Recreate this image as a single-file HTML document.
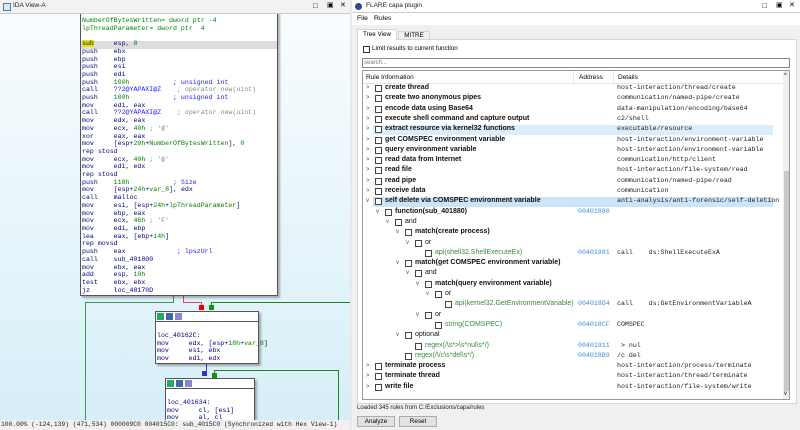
<!DOCTYPE html><html><head><style>
*{margin:0;padding:0;box-sizing:border-box}
body{width:800px;height:430px;overflow:hidden;background:#e8e8e8;font-family:"Liberation Sans",sans-serif;position:relative}
.a{position:absolute;white-space:nowrap}
.m{font-family:"Liberation Mono",monospace}
#L{position:absolute;left:0;top:0;width:350px;height:430px;background:linear-gradient(#fafdfe,#d6eef8);overflow:hidden}
.box{position:absolute;background:#fff;border:1px solid #555;box-shadow:2px 2px 2px rgba(0,0,0,.3)}
.code{font-family:"Liberation Mono",monospace;font-size:6.6px;line-height:7.7px;color:#000080;white-space:pre}
.g{color:#008000}.gy{color:#888}.bl{color:#2020ff}
.ln{position:absolute}
.row{position:absolute;height:10.3px;font-size:7px;line-height:10.3px;white-space:nowrap;left:0;width:412px}
.cb{position:absolute;top:2px;width:7px;height:7px;border:1px solid #444;background:#fff}
.ar{position:absolute;top:0;font-size:6px;color:#555}
.t{position:absolute;font-weight:bold;color:#111}
.d{position:absolute;left:255px;font-family:"Liberation Mono",monospace;font-size:6.6px;color:#222;white-space:pre}
.ad{position:absolute;left:216px;font-family:"Liberation Mono",monospace;font-size:6.6px;color:#3c8ce0}
.gr{color:#3a8a3a!important;font-weight:normal!important}
</style></head><body>
<div id="L">
<!-- edges -->
<div class="ln" style="left:85px;top:302px;width:1px;height:128px;background:#3a9a5a"></div>
<div class="ln" style="left:85px;top:302px;width:89px;height:1px;background:#3a9a5a"></div>
<div class="ln" style="left:173px;top:295px;width:1px;height:8px;background:#3a9a5a"></div>
<div class="ln" style="left:183px;top:295px;width:1px;height:8px;background:#c55"></div>
<div class="ln" style="left:183px;top:302px;width:19px;height:1px;background:#c55"></div>
<div class="ln" style="left:201px;top:302px;width:1px;height:7px;background:#c55"></div>
<div class="a" style="left:199px;top:305px;width:5px;height:5px;background:#e00"></div>
<div class="ln" style="left:211px;top:302px;width:140px;height:1px;background:#1a8a1a"></div>
<div class="ln" style="left:211px;top:302px;width:1px;height:7px;background:#1a8a1a"></div>
<div class="a" style="left:209px;top:305px;width:5px;height:5px;background:#1a8a1a"></div>
<div class="ln" style="left:206px;top:363px;width:1px;height:12px;background:#44d"></div>
<div class="a" style="left:202px;top:371px;width:5px;height:5px;background:#33b"></div>
<div class="ln" style="left:214px;top:370px;width:125px;height:1px;background:#1a8a1a"></div>
<div class="ln" style="left:338px;top:370px;width:1px;height:60px;background:#1a8a1a"></div>
<div class="ln" style="left:214px;top:370px;width:1px;height:7px;background:#1a8a1a"></div>
<div class="a" style="left:212px;top:373px;width:5px;height:5px;background:#1a8a1a"></div>
<!-- main box -->
<div class="box" style="left:80px;top:-10px;width:198px;height:306px">
<div class="a" style="left:0;top:50px;width:196px;height:7.7px;background:#ddd"></div>
<div class="code a" style="left:1px;top:26px"><span class="g">NumberOfBytesWritten= dword ptr -4
lpThreadParameter= dword ptr  4</span>

<span style="background:#e6e600">sub</span>     esp, <span class="g">8</span>
push    ebx
push    ebp
push    esi
push    edi
push    <span class="g">100h</span>           <span class="bl">; unsigned int</span>
call    <span class="bl">??2@YAPAXI@Z</span>    <span class="gy">; operator new(uint)</span>
push    <span class="g">100h</span>           <span class="bl">; unsigned int</span>
mov     edi, eax
call    <span class="bl">??2@YAPAXI@Z</span>    <span class="gy">; operator new(uint)</span>
mov     edx, eax
mov     ecx, <span class="g">40h</span> <span class="gy">; '@'</span>
xor     eax, eax
mov     [esp+<span class="g">20h</span>+<span class="g">NumberOfBytesWritten</span>], <span class="g">0</span>
rep stosd
mov     ecx, <span class="g">40h</span> <span class="gy">; '@'</span>
mov     edi, edx
rep stosd
push    <span class="g">118h</span>           <span class="bl">; Size</span>
mov     [esp+<span class="g">24h</span>+<span class="g">var_8</span>], edx
call    malloc
mov     esi, [esp+<span class="g">24h</span>+<span class="g">lpThreadParameter</span>]
mov     ebp, eax
mov     ecx, <span class="g">46h</span> <span class="gy">; 'F'</span>
mov     edi, ebp
lea     eax, [ebp+<span class="g">14h</span>]
rep movsd
push    eax             <span class="bl">; lpszUrl</span>
call    sub_401800
mov     ebx, eax
add     esp, <span class="g">10h</span>
test    ebx, ebx
jz      loc_40170D</div>
</div>
<div class="a" style="left:0;top:0;width:350px;height:14px;background:#f2f2f2;border-bottom:1px solid #ccc"></div>
<div class="a" style="left:3px;top:3px;width:8px;height:8px;border:1px solid #5577aa;background:#dde8f5"></div>
<div class="a" style="left:13px;top:2px;font-size:6.5px;color:#222">IDA View-A</div>
<div class="a" style="left:313px;top:1px;font-size:8px">□</div><div class="a" style="left:327px;top:1px;font-size:7px">▣</div><div class="a" style="left:340px;top:1px;font-size:7px">✕</div>
<!-- box2 -->
<div class="box" style="left:155px;top:311px;width:104px;height:53px">
<div class="a" style="left:0;top:0;width:102px;height:10px;border-bottom:1px solid #555"></div>
<div class="a" style="left:1px;top:1px;width:7px;height:7px;background:#2a6"></div><div class="a" style="left:10px;top:1px;width:7px;height:7px;background:#46a"></div><div class="a" style="left:19px;top:1px;width:7px;height:7px;background:#88c"></div>
<div class="code a" style="left:1px;top:20px">loc_40162C:
mov     edx, [esp+<span class="g">18h</span>+<span class="g">var_8</span>]
mov     esi, ebx
mov     edi, edx</div></div>
<div class="box" style="left:165px;top:378px;width:90px;height:60px">
<div class="a" style="left:0;top:0;width:88px;height:10px;border-bottom:1px solid #555"></div>
<div class="a" style="left:1px;top:1px;width:7px;height:7px;background:#2a6"></div><div class="a" style="left:10px;top:1px;width:7px;height:7px;background:#46a"></div><div class="a" style="left:19px;top:1px;width:7px;height:7px;background:#88c"></div>
<div class="code a" style="left:1px;top:20px">loc_401634:
mov     cl, [esi]
mov     al, cl</div></div>
<div class="a m" style="left:0;top:420px;width:350px;height:10px;background:#f0f0f0;font-size:6.3px;line-height:10px;color:#222;padding-left:1px">100.00% (-124,139) (471,534) 000009C0 004015C0: sub_4015C0 (Synchronized with Hex View-1)</div>
</div>
<!-- right -->
<div class="a" style="left:352px;top:0;width:448px;height:430px;background:#f0f0f0"></div>
<div class="a" style="left:352px;top:0;width:448px;height:13px;background:#fff;border-bottom:1px solid #ccc"></div>
<div class="a" style="left:355px;top:3px;width:7px;height:7px;border-radius:50%;background:#2a4a8a"></div>
<div class="a" style="left:366px;top:2px;font-size:6.5px;color:#222">FLARE capa plugin</div>
<div class="a" style="left:762px;top:1px;font-size:8px">□</div><div class="a" style="left:776px;top:1px;font-size:7px">▣</div><div class="a" style="left:789px;top:1px;font-size:7px">✕</div>
<div class="a" style="left:352px;top:13px;width:448px;height:12px;background:#fff"></div>
<div class="a" style="left:357px;top:15px;font-size:6.8px">File</div><div class="a" style="left:374px;top:15px;font-size:6.8px">Rules</div>
<div class="a" style="left:357px;top:39px;width:440px;height:365px;background:#fff;border:1px solid #d5d5d5"></div>
<div class="a" style="left:357px;top:29px;width:40px;height:11px;background:#fff;border:1px solid #d5d5d5;border-bottom:none;font-size:6.3px;text-align:center;line-height:10px">Tree View</div>
<div class="a" style="left:398px;top:31px;width:32px;height:9px;background:#f0f0f0;border:1px solid #d5d5d5;font-size:6.3px;text-align:center;line-height:8px">MITRE</div>
<div class="a" style="left:363px;top:46px;width:7px;height:7px;border:1px solid #333;background:#fff"></div>
<div class="a" style="left:372px;top:45px;font-size:6.3px">Limit results to current function</div>
<div class="a" style="left:362px;top:58px;width:428px;height:10px;border:1px solid #888;background:#fff;font-size:6px;color:#777;line-height:8px;padding-left:1px">search...</div>
<div class="a" style="left:362px;top:70px;width:428px;height:330px;border:1px solid #999;background:#fff;overflow:hidden">
<div class="a" style="left:0;top:0;width:426px;height:13px;border-bottom:1px solid #e5e5e5;font-size:6.5px;line-height:13px"><span class="a" style="left:3px">Rule Information</span><span class="a" style="left:216px">Address</span><span class="a" style="left:255px">Details</span></div>
<div class="a" style="left:210px;top:0;width:1px;height:13px;background:#e5e5e5"></div>
<div class="a" style="left:250px;top:0;width:1px;height:13px;background:#e5e5e5"></div>
<div class="a" style="left:420px;top:0;width:8px;height:330px;background:#f0f0f0"></div>
<div class="a" style="left:421px;top:100px;width:6px;height:220px;background:#c8c8c8"></div>
<div class="a" style="left:421px;top:2px;font-size:6px">^</div><div class="a" style="left:421px;top:320px;font-size:6px">v</div>
<div class="a" style="left:10px;top:54px;width:400px;height:10px;background:#dcecf8"></div>
<div class="a" style="left:10px;top:126px;width:400px;height:10px;background:#cce4f7"></div>
</div>
<div class="a" style="left:357px;top:405px;font-size:6px;color:#222">Loaded 345 rules from C:/Exclusions/capa/rules</div>
<div class="a" style="left:357px;top:416px;width:38px;height:11px;border:1px solid #adadad;background:#e1e1e1;font-size:6.3px;text-align:center;line-height:9px">Analyze</div>
<div class="a" style="left:399px;top:416px;width:38px;height:11px;border:1px solid #adadad;background:#e1e1e1;font-size:6.3px;text-align:center;line-height:9px">Reset</div>
<div id="rows" style="position:absolute;left:362px;top:83px">
<div class="row" style="top:0"><span class="ar" style="left:4px">&gt;</span><span class="cb" style="left:13px"></span><span class="t" style="left:23px">create thread</span><span class="d">host-interaction/thread/create</span></div>
<div class="row" style="top:10.3px"><span class="ar" style="left:4px">&gt;</span><span class="cb" style="left:13px"></span><span class="t" style="left:23px">create two anonymous pipes</span><span class="d">communication/named-pipe/create</span></div>
<div class="row" style="top:20.6px"><span class="ar" style="left:4px">&gt;</span><span class="cb" style="left:13px"></span><span class="t" style="left:23px">encode data using Base64</span><span class="d">data-manipulation/encoding/base64</span></div>
<div class="row" style="top:30.9px"><span class="ar" style="left:4px">&gt;</span><span class="cb" style="left:13px"></span><span class="t" style="left:23px">execute shell command and capture output</span><span class="d">c2/shell</span></div>
<div class="row" style="top:41.2px"><span class="ar" style="left:4px">&gt;</span><span class="cb" style="left:13px"></span><span class="t" style="left:23px">extract resource via kernel32 functions</span><span class="d">executable/resource</span></div>
<div class="row" style="top:51.5px"><span class="ar" style="left:4px">&gt;</span><span class="cb" style="left:13px"></span><span class="t" style="left:23px">get COMSPEC environment variable</span><span class="d">host-interaction/environment-variable</span></div>
<div class="row" style="top:61.8px"><span class="ar" style="left:4px">&gt;</span><span class="cb" style="left:13px"></span><span class="t" style="left:23px">query environment variable</span><span class="d">host-interaction/environment-variable</span></div>
<div class="row" style="top:72.1px"><span class="ar" style="left:4px">&gt;</span><span class="cb" style="left:13px"></span><span class="t" style="left:23px">read data from Internet</span><span class="d">communication/http/client</span></div>
<div class="row" style="top:82.4px"><span class="ar" style="left:4px">&gt;</span><span class="cb" style="left:13px"></span><span class="t" style="left:23px">read file</span><span class="d">host-interaction/file-system/read</span></div>
<div class="row" style="top:92.7px"><span class="ar" style="left:4px">&gt;</span><span class="cb" style="left:13px"></span><span class="t" style="left:23px">read pipe</span><span class="d">communication/named-pipe/read</span></div>
<div class="row" style="top:103px"><span class="ar" style="left:4px">&gt;</span><span class="cb" style="left:13px"></span><span class="t" style="left:23px">receive data</span><span class="d">communication</span></div>
<div class="row" style="top:113.3px"><span class="ar" style="left:4px">v</span><span class="cb" style="left:13px"></span><span class="t" style="left:23px">self delete via COMSPEC environment variable</span><span class="d">anti-analysis/anti-forensic/self-deletion</span></div>
<div class="row" style="top:123.6px"><span class="ar" style="left:14px">v</span><span class="cb" style="left:23px"></span><span class="t" style="left:33px">function(sub_401880)</span><span class="ad">00401880</span></div>
<div class="row" style="top:133.9px"><span class="ar" style="left:24px">v</span><span class="cb" style="left:33px"></span><span class="t" style="left:43px;font-weight:normal">and</span></div>
<div class="row" style="top:144.2px"><span class="ar" style="left:34px">v</span><span class="cb" style="left:43px"></span><span class="t" style="left:53px">match(create process)</span></div>
<div class="row" style="top:154.5px"><span class="ar" style="left:44px">v</span><span class="cb" style="left:53px"></span><span class="t" style="left:63px;font-weight:normal">or</span></div>
<div class="row" style="top:164.8px"><span class="cb" style="left:63px"></span><span class="t gr" style="left:73px">api(shell32.ShellExecuteEx)</span><span class="ad">00401981</span><span class="d">call    ds:ShellExecuteExA</span></div>
<div class="row" style="top:175.1px"><span class="ar" style="left:34px">v</span><span class="cb" style="left:43px"></span><span class="t" style="left:53px">match(get COMSPEC environment variable)</span></div>
<div class="row" style="top:185.4px"><span class="ar" style="left:44px">v</span><span class="cb" style="left:53px"></span><span class="t" style="left:63px;font-weight:normal">and</span></div>
<div class="row" style="top:195.7px"><span class="ar" style="left:54px">v</span><span class="cb" style="left:63px"></span><span class="t" style="left:73px">match(query environment variable)</span></div>
<div class="row" style="top:206px"><span class="ar" style="left:64px">v</span><span class="cb" style="left:73px"></span><span class="t" style="left:83px;font-weight:normal">or</span></div>
<div class="row" style="top:216.3px"><span class="cb" style="left:83px"></span><span class="t gr" style="left:93px">api(kernel32.GetEnvironmentVariable)</span><span class="ad">004018D4</span><span class="d">call    ds:GetEnvironmentVariableA</span></div>
<div class="row" style="top:226.6px"><span class="ar" style="left:54px">v</span><span class="cb" style="left:63px"></span><span class="t" style="left:73px;font-weight:normal">or</span></div>
<div class="row" style="top:236.9px"><span class="cb" style="left:73px"></span><span class="t gr" style="left:83px">string(COMSPEC)</span><span class="ad">004018CF</span><span class="d">COMSPEC</span></div>
<div class="row" style="top:247.2px"><span class="ar" style="left:34px">v</span><span class="cb" style="left:43px"></span><span class="t" style="left:53px;font-weight:normal">optional</span></div>
<div class="row" style="top:257.5px"><span class="cb" style="left:53px"></span><span class="t gr" style="left:63px">regex(/\s*&gt;\s*nul\s*/)</span><span class="ad">00401911</span><span class="d"> &gt; nul</span></div>
<div class="row" style="top:267.8px"><span class="cb" style="left:43px"></span><span class="t gr" style="left:53px">regex(/\/c\s*del\s*/)</span><span class="ad">004018B9</span><span class="d">/c del</span></div>
<div class="row" style="top:278.1px"><span class="ar" style="left:4px">&gt;</span><span class="cb" style="left:13px"></span><span class="t" style="left:23px">terminate process</span><span class="d">host-interaction/process/terminate</span></div>
<div class="row" style="top:288.4px"><span class="ar" style="left:4px">&gt;</span><span class="cb" style="left:13px"></span><span class="t" style="left:23px">terminate thread</span><span class="d">host-interaction/thread/terminate</span></div>
<div class="row" style="top:298.7px"><span class="ar" style="left:4px">&gt;</span><span class="cb" style="left:13px"></span><span class="t" style="left:23px">write file</span><span class="d">host-interaction/file-system/write</span></div>
</div>
</body></html>
